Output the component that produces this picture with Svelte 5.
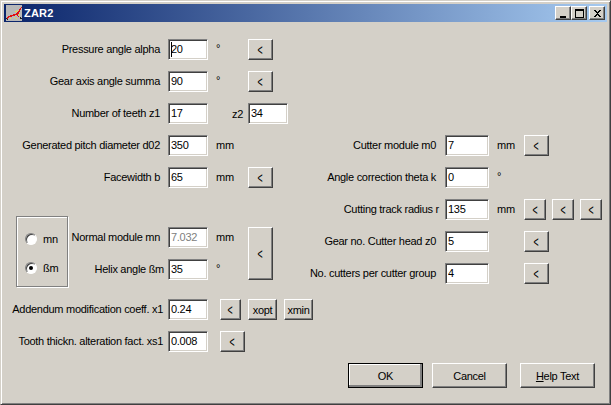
<script>
    const iconRed = [[1,12],[2,12],[1,13],[2,11],[3,11],[4,11],[5,11],[4,10],[5,10],[6,10],[7,10],[8,10],[7,9],[8,9],[9,9],[10,9],[11,9],[10,8],[11,8],[12,8],[12,7],[11,7],[13,6],[12,6],[13,5],[14,4],[13,4],[14,3],[15,2],[11,10],[12,11]];
    const iconYellow = [[8,12],[9,6],[10,6],[11,5],[13,9],[13,10],[4,13],[10,13]];
    const iconDark = [[0,13],[1,14],[14,12],[14,13],[15,13]];
</script>

<div class="window">
    <div class="titlebar">
        <svg class="appicon" width="16" height="16" viewBox="0 0 16 16" shape-rendering="crispEdges">
            <rect width="16" height="16" fill="#b8b8b8" />
            {#each iconRed as p}<rect x={p[0]} y={p[1]} width="1" height="1" fill="#e01010" />{/each}
            {#each iconYellow as p}<rect x={p[0]} y={p[1]} width="1" height="1" fill="#f0e040" />{/each}
            {#each iconDark as p}<rect x={p[0]} y={p[1]} width="1" height="1" fill="#202020" />{/each}
        </svg>
        <span class="title">ZAR2</span>
        <div class="caption-btns">
            <button class="cap">
                <svg width="10" height="9" viewBox="0 0 10 9" shape-rendering="crispEdges"><rect x="1" y="7" width="6" height="2" fill="#000" /></svg>
            </button>
            <button class="cap">
                <svg width="10" height="9" viewBox="0 0 10 9" shape-rendering="crispEdges"><path d="M0 0h9v9h-9z M1 2v6h7v-6z" fill="#000" fill-rule="evenodd" /></svg>
            </button>
            <button class="cap close">
                <svg width="10" height="9" viewBox="0 0 10 9" shape-rendering="crispEdges"><path d="M1 1h2v1h1v1h1v-1h1v-1h2v1h-1v1h-1v1h-1v1h1v1h1v1h1v1h-2v-1h-1v-1h-1v1h-1v1h-2v-1h1v-1h1v-1h1v-1h-1v-1h-1v-1h-1z" fill="#000" /></svg>
            </button>
        </div>
    </div>

    <div class="body">
        <div class="columns">
            <div class="left">
                <div class="row">
                    <span class="label">Pressure angle alpha</span>
                    <input class="field caret" value="20" />
                    <span class="unit deg">°</span>
                    <button class="btn arrow"><span class="lt">&lt;</span></button>
                </div>
                <div class="row">
                    <span class="label">Gear axis angle summa</span>
                    <input class="field" value="90" />
                    <span class="unit deg">°</span>
                    <button class="btn arrow"><span class="lt">&lt;</span></button>
                </div>
                <div class="row">
                    <span class="label">Number of teeth z1</span>
                    <input class="field" value="17" />
                    <span class="z2">z2</span>
                    <input class="field" value="34" />
                </div>
                <div class="row">
                    <span class="label">Generated pitch diameter d02</span>
                    <input class="field" value="350" />
                    <span class="unit">mm</span>
                </div>
                <div class="row">
                    <span class="label">Facewidth b</span>
                    <input class="field" value="65" />
                    <span class="unit">mm</span>
                    <button class="btn arrow"><span class="lt">&lt;</span></button>
                </div>

                <div class="module">
                    <div class="group">
                        <div class="radio-line">
                            <span class="radio"></span>
                            <span>mn</span>
                        </div>
                        <div class="radio-line">
                            <span class="radio on"></span>
                            <span>ßm</span>
                        </div>
                    </div>
                    <div class="module-rows">
                        <div class="row">
                            <span class="label short">Normal module mn</span>
                            <input class="field" value="7.032" disabled />
                            <span class="unit">mm</span>
                        </div>
                        <div class="row">
                            <span class="label short tight">Helix angle ßm</span>
                            <input class="field" value="35" />
                            <span class="unit deg">°</span>
                        </div>
                    </div>
                    <button class="btn arrow tall"><span class="lt">&lt;</span></button>
                </div>

                <div class="row">
                    <span class="label near">Addendum modification coeff. x1</span>
                    <input class="field" value="0.24" />
                    <button class="btn narrow first"><span class="lt">&lt;</span></button>
                    <button class="btn opt">xopt</button>
                    <button class="btn opt">xmin</button>
                </div>
                <div class="row">
                    <span class="label near">Tooth thickn. alteration fact. xs1</span>
                    <input class="field" value="0.008" />
                    <button class="btn arrow first"><span class="lt">&lt;</span></button>
                </div>
            </div>

            <div class="right">
                <div class="row">
                    <span class="label">Cutter module m0</span>
                    <input class="field" value="7" />
                    <span class="unit">mm</span>
                    <button class="btn arrow"><span class="lt">&lt;</span></button>
                </div>
                <div class="row">
                    <span class="label">Angle correction theta k</span>
                    <input class="field" value="0" />
                    <span class="unit deg">°</span>
                </div>
                <div class="row">
                    <span class="label near">Cutting track radius r</span>
                    <input class="field" value="135" />
                    <span class="unit">mm</span>
                    <div class="triple">
                        <button class="btn small"><span class="lt">&lt;</span></button>
                        <button class="btn small"><span class="lt">&lt;</span></button>
                        <button class="btn small"><span class="lt">&lt;</span></button>
                    </div>
                </div>
                <div class="row">
                    <span class="label">Gear no. Cutter head z0</span>
                    <input class="field" value="5" />
                    <span class="unit"></span>
                    <button class="btn arrow"><span class="lt">&lt;</span></button>
                </div>
                <div class="row">
                    <span class="label">No. cutters per cutter group</span>
                    <input class="field" value="4" />
                    <span class="unit"></span>
                    <button class="btn arrow"><span class="lt">&lt;</span></button>
                </div>
            </div>
        </div>

        <div class="footer">
            <button class="btn action default">OK</button>
            <button class="btn action">Cancel</button>
            <button class="btn action help"><u>H</u>elp Text</button>
        </div>
    </div>
</div>

<style>
    :global(body) {
        margin: 0;
        background: #d4d0c8;
    }

    .window {
        box-sizing: border-box;
        width: 611px;
        height: 405px;
        padding: 3px;
        background: #d4d0c8;
        border: 1px solid;
        border-color: #d4d0c8 #404040 #404040 #d4d0c8;
        box-shadow: inset 1px 1px 0 #fff, inset -1px -1px 0 #808080;
        font-family: "Liberation Sans", Arial, sans-serif;
        font-size: 11px;
        letter-spacing: -0.28px;
        color: #000;
        display: flex;
        flex-direction: column;
    }

    .titlebar {
        height: 18px;
        flex: none;
        display: flex;
        align-items: center;
        padding-left: 2px;
        background: linear-gradient(90deg, #0a246a, #a6caf0);
    }

    .appicon {
        flex: none;
    }

    .title {
        margin-left: 2px;
        font-size: 11px;
        font-weight: bold;
        letter-spacing: 0.2px;
        color: #fff;
    }

    .caption-btns {
        margin-left: auto;
        margin-right: 2px;
        display: flex;
    }

    .cap {
        box-sizing: border-box;
        width: 16px;
        height: 14px;
        padding: 0 0 0 1px;
        display: flex;
        align-items: center;
        justify-content: center;
        background: #d4d0c8;
        border: 1px solid;
        border-color: #fff #404040 #404040 #fff;
        box-shadow: inset -1px -1px 0 #808080;
    }

    .close {
        margin-left: 2px;
    }

    .body {
        flex: 1;
        display: flex;
        flex-direction: column;
        padding-top: 17px;
    }

    .columns {
        display: flex;
    }

    .left {
        width: 300px;
        flex: none;
    }

    .right {
        padding-top: 96px;
        flex: 1;
    }

    .row {
        display: flex;
        align-items: center;
        height: 21px;
        margin-bottom: 11px;
    }

    .label {
        flex: none;
        box-sizing: border-box;
        width: 164px;
        padding-right: 8px;
        margin-top: -1px;
        text-align: right;
        white-space: nowrap;
    }

    .label.near {
        padding-right: 5px;
    }

    .right .label {
        width: 141px;
        padding-right: 9px;
    }

    .right .label.near {
        padding-right: 6px;
    }

    .label.short {
        width: 100px;
    }

    .label.short.tight {
        padding-right: 4px;
    }

    .field {
        box-sizing: border-box;
        flex: none;
        width: 40px;
        height: 21px;
        padding: 0 0 2px 2px;
        margin: 0;
        background: #fff;
        border: 1px solid;
        border-color: #808080 #fff #fff #808080;
        box-shadow: inset 1px 1px 0 #404040, inset -1px -1px 0 #d4d0c8;
        font: inherit;
        letter-spacing: inherit;
        color: #000;
        border-radius: 0;
        outline: none;
    }

    .caret {
        background: linear-gradient(#000, #000) 2px 2px / 1px 15px no-repeat #fff;
    }

    .field:disabled {
        background: #fff;
        color: #808080;
        opacity: 1;
    }

    .right .field {
        width: 44px;
    }

    .unit {
        flex: none;
        width: 40px;
        box-sizing: border-box;
        padding-left: 8px;
        margin-top: -1px;
    }

    .deg {
        margin-top: -4px;
    }

    .right .unit {
        width: 35px;
    }

    .z2 {
        flex: none;
        width: 40px;
        box-sizing: border-box;
        padding-right: 5px;
        text-align: right;
    }

    .btn {
        box-sizing: border-box;
        flex: none;
        height: 21px;
        padding: 0;
        background: #d4d0c8;
        border: 1px solid;
        border-color: #fff #404040 #404040 #fff;
        box-shadow: inset -1px -1px 0 #808080;
        font: inherit;
        letter-spacing: inherit;
        color: #000;
    }

    .lt {
        display: inline-block;
        transform: scale(0.8, 1.3);
    }

    .arrow {
        width: 25px;
    }

    .small {
        width: 22px;
    }

    .narrow {
        width: 21px;
    }

    .first {
        margin-left: 12px;
    }

    .opt {
        width: 29px;
        margin-left: 7px;
    }

    .triple {
        display: flex;
        gap: 6px;
    }

    .module {
        display: flex;
        align-items: flex-start;
        height: 71px;
        margin-top: 28px;
        margin-bottom: 12px;
        padding-left: 12px;
    }

    .group {
        box-sizing: border-box;
        flex: none;
        width: 52px;
        height: 71px;
        padding: 4px 0 0 8px;
        display: flex;
        flex-direction: column;
        justify-content: center;
        gap: 13px;
        border: 1px solid #808080;
        box-shadow: 1px 1px 0 #fff, inset 1px 1px 0 #fff;
    }

    .radio-line {
        display: flex;
        align-items: center;
        gap: 6px;
        height: 16px;
    }

    .radio {
        box-sizing: border-box;
        width: 12px;
        height: 12px;
        border-radius: 50%;
        background: #fff;
        border: 1px solid;
        border-color: #808080 #fff #fff #808080;
        box-shadow: inset 1px 1px 0 #404040;
        position: relative;
    }

    .radio.on::after {
        content: "";
        position: absolute;
        left: 3px;
        top: 3px;
        width: 4px;
        height: 4px;
        border-radius: 50%;
        background: #000;
    }

    .module-rows {
        flex: none;
        margin-top: 11px;
    }

    .tall {
        height: 53px;
        margin-top: 11px;
    }

    .footer {
        display: flex;
        justify-content: flex-end;
        gap: 9px;
        padding-right: 12px;
    }

    .action {
        width: 75px;
        height: 25px;
    }

    .help {
        margin-left: 4px;
    }

    .default {
        outline: 1px solid #000;
        outline-offset: -1px;
        box-shadow: inset -2px -2px 0 #808080, inset 1px 1px 0 #fff;
    }
</style>
